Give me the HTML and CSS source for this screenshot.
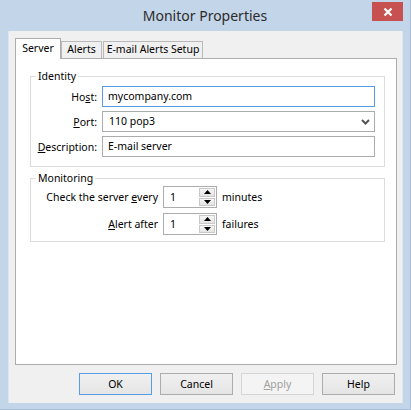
FILE: index.html
```html
<!DOCTYPE html>
<html lang="en">
<head>
  <meta charset="UTF-8">
  <meta name="viewport" content="width=device-width, initial-scale=1.0">
  <title>Monitor Properties</title>
  <link rel="stylesheet" href="styles.css">
</head>
<body>
  <div class="window">
    <div class="titlebar">
      <span></span>
      <div class="title">Monitor Properties</div>
      <button class="close" aria-label="Close">
        <svg width="10" height="10" viewBox="0 0 10 10">
          <path d="M1.5 1.5 L8.5 8.5 M8.5 1.5 L1.5 8.5" stroke="#fff" stroke-width="2.2"/>
        </svg>
      </button>
    </div>

    <div class="client">
      <div class="tabs">
        <div class="tab active">Server</div>
        <div class="tab tab-alerts">Alerts</div>
        <div class="tab tab-setup">E-mail Alerts Setup</div>
      </div>

      <div class="panel">
        <fieldset class="group identity">
          <legend>Identity</legend>
          <div class="form">
            <label class="lbl">Ho<u>s</u>t:</label>
            <div class="field focus">mycompany.com</div>

            <label class="lbl"><u>P</u>ort:</label>
            <div class="field combo">
              <span>110 pop3</span>
              <svg width="9" height="6" viewBox="0 0 9 6">
                <path d="M1 1 L4.5 4.5 L8 1" stroke="#555" stroke-width="2" fill="none"/>
              </svg>
            </div>

            <label class="lbl"><u>D</u>escription:</label>
            <div class="field">E-mail server</div>
          </div>
        </fieldset>

        <fieldset class="group monitoring">
          <legend>Monitoring</legend>
          <div class="spin-form">
            <label class="lbl">Check the server <u>e</u>very</label>
            <div class="spinner">
              <span>1</span>
              <div class="spin-btns">
                <div class="spin-btn">
                  <svg width="7" height="4" viewBox="0 0 7 4"><path d="M0 4 L3.5 0 L7 4 Z" fill="#000"/></svg>
                </div>
                <div class="spin-btn">
                  <svg width="7" height="4" viewBox="0 0 7 4"><path d="M0 0 L3.5 4 L7 0 Z" fill="#000"/></svg>
                </div>
              </div>
            </div>
            <span class="unit">minutes</span>

            <label class="lbl"><u>A</u>lert after</label>
            <div class="spinner">
              <span>1</span>
              <div class="spin-btns">
                <div class="spin-btn">
                  <svg width="7" height="4" viewBox="0 0 7 4"><path d="M0 4 L3.5 0 L7 4 Z" fill="#000"/></svg>
                </div>
                <div class="spin-btn">
                  <svg width="7" height="4" viewBox="0 0 7 4"><path d="M0 0 L3.5 4 L7 0 Z" fill="#000"/></svg>
                </div>
              </div>
            </div>
            <span class="unit">failures</span>
          </div>
        </fieldset>
      </div>

      <div class="buttons">
        <button class="btn default">OK</button>
        <button class="btn">Cancel</button>
        <button class="btn disabled"><u>A</u>pply</button>
        <button class="btn">Help</button>
      </div>
    </div>
  </div>
</body>
</html>
```

FILE: styles.css
```css
body {
  margin: 0;
  padding: 0;
  font-family: "Noto Sans", "Open Sans", sans-serif;
  font-size: 10.5px;
  color: #000;
  background-color: #c3d5e8;
}
.window {
  width: 411px;
  height: 410px;
  box-sizing: border-box;
  background-color: #c3d5e8;
  border-right: 1px solid #a9bdd4;
  border-bottom: 1px solid #a9bdd4;
}
.titlebar {
  height: 31px;
  display: grid;
  grid-template-columns: 1fr auto 1fr;
}
.title {
  font-size: 14px;
  line-height: 31px;
  color: #2b2b2b;
}
.close {
  justify-self: end;
  align-self: start;
  width: 31px;
  height: 19px;
  margin: 2px 7px 0 0;
  padding: 0;
  border: none;
  background-color: #c75050;
  display: flex;
  align-items: center;
  justify-content: center;
}
.client {
  margin-left: 8px;
  width: 395px;
  height: 372px;
  box-sizing: border-box;
  padding: 7px 7px 0 6px;
  background-color: #f0f0f0;
  border-left: 1px solid #dde5ee;
  border-right: 1px solid #dde5ee;
}
.tabs {
  display: flex;
  align-items: flex-end;
  height: 20px;
  margin-left: 0;
  position: relative;
  z-index: 1;
}
.tab {
  box-sizing: border-box;
  height: 17px;
  line-height: 15px;
  text-align: center;
  border: 1px solid #b9b9b9;
  border-bottom: none;
  background-color: #f0f0f0;
}
.tab.active {
  width: 46px;
  height: 21px;
  line-height: 18px;
  margin-bottom: -1px;
  background-color: #fff;
  border-color: #adadad;
}
.tab-alerts {
  width: 41px;
}
.tab-setup {
  width: 100px;
  margin-left: 1px;
}
.panel {
  box-sizing: border-box;
  width: 382px;
  height: 307px;
  padding: 9px 11px 0 14px;
  background-color: #fff;
  border: 1px solid #adadad;
}
.group {
  margin: 0;
  border: 1px solid #dcdcdc;
  min-width: 0;
}
.group legend {
  padding: 0 2px;
  margin-left: 5px;
  line-height: 16px;
}
.identity {
  padding: 2px 9px 9px 0;
}
.monitoring {
  margin-top: 3px;
  padding: 0 9px 6px 0;
}
.form {
  display: grid;
  grid-template-columns: 66px 1fr;
  column-gap: 5px;
  row-gap: 4px;
}
.lbl {
  text-align: right;
  align-self: center;
  white-space: nowrap;
}
.field {
  box-sizing: border-box;
  height: 21px;
  line-height: 19px;
  padding: 0 5px;
  border: 1px solid #acacac;
  background-color: #fff;
}
.field.focus {
  border-color: #569de5;
}
.combo {
  display: flex;
  justify-content: space-between;
  align-items: center;
  padding: 0 4px 0 6px;
}
.spin-form {
  display: grid;
  grid-template-columns: 127px 54px auto;
  column-gap: 5px;
  row-gap: 5px;
  align-items: center;
}
.spinner {
  box-sizing: border-box;
  height: 22px;
  border: 1px solid #acacac;
  background-color: #fff;
  display: flex;
  justify-content: space-between;
  padding: 1px 1px 1px 6px;
  line-height: 18px;
}
.spin-btns {
  width: 16px;
  display: flex;
  flex-direction: column;
  gap: 1px;
}
.spin-btn {
  flex: 1;
  box-sizing: border-box;
  border: 1px solid #c9c9c9;
  background: linear-gradient(#f6f6f6, #e4e4e4);
  display: flex;
  align-items: center;
  justify-content: center;
}
.buttons {
  display: flex;
  justify-content: flex-end;
  gap: 8px;
  margin-top: 8px;
  padding-right: 0;
}
.btn {
  box-sizing: border-box;
  width: 73px;
  height: 22px;
  padding: 0;
  font-family: inherit;
  font-size: 10.5px;
  color: #000;
  border: 1px solid #acacac;
  background: linear-gradient(#f0f0f0, #e5e5e5);
}
.btn.default {
  border-color: #569de5;
}
.btn.disabled {
  color: #a0a0a0;
  border-color: #d5d5d5;
  background: #f4f4f4;
}
```
